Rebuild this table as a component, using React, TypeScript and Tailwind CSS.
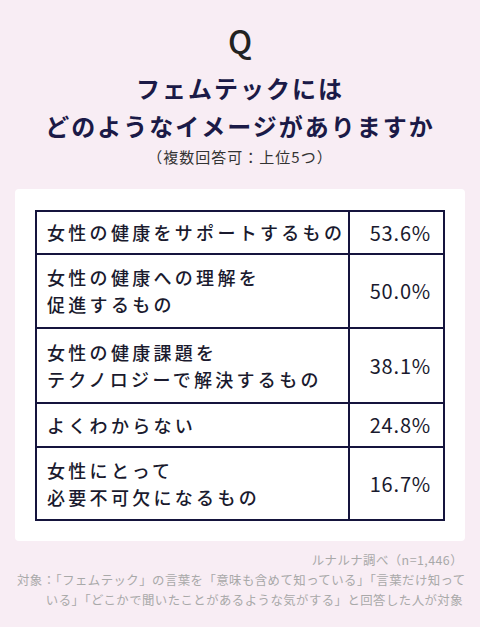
const rows = [
  { lines: ["女性の健康をサポートするもの"], value: "53.6%", h: "h-[41px]" },
  { lines: ["女性の健康への理解を", "促進するもの"], value: "50.0%", h: "h-[74px]" },
  { lines: ["女性の健康課題を", "テクノロジーで解決するもの"], value: "38.1%", h: "h-[75px]" },
  { lines: ["よくわからない"], value: "24.8%", h: "h-[44px]" },
  { lines: ["女性にとって", "必要不可欠になるもの"], value: "16.7%", h: "h-[73px]" },
];

export default function App() {
  return (
    <div
      className="w-[480px] h-[627px] bg-[#f8edf4] flex flex-col items-center pt-[20px]"
      style={{ fontFamily: '"Noto Sans CJK JP", "Noto Sans", sans-serif' }}
    >
      {/* Q mark */}
      <div className="text-[32px] leading-[40px] font-medium text-[#222222]">Q</div>

      {/* Title */}
      <h1 className="mt-[9px] text-center text-[24px] leading-[38px] font-bold tracking-[2px] text-[#1b1a47]">
        フェムテックには
        <br />
        どのようなイメージがありますか
      </h1>
      <p className="mt-[1px] text-[15px] leading-[22px] tracking-[1px] text-[#333333]">
        （複数回答可：上位5つ）
      </p>

      {/* Card */}
      <div className="mt-[21px] w-[450px] bg-white rounded-[4px] px-[20px] pt-[21px] pb-[20px]">
        <div className="border-2 border-[#15143d]">
          {rows.map((r, i) => (
            <div
              key={i}
              className={`flex ${r.h} ${i > 0 ? "border-t-2 border-[#15143d]" : ""}`}
            >
              <div className="w-[313px] border-r-2 border-[#15143d] flex flex-col justify-center pl-[10px] text-[18px] leading-[27px] font-medium tracking-[3.3px] text-[#1a1a2e]">
                {r.lines.map((l) => (
                  <span key={l} className="whitespace-nowrap">
                    {l}
                  </span>
                ))}
              </div>
              <div className="flex-1 flex items-center justify-end pr-[12px] text-[20px] tracking-[0.8px] text-[#1a1a2e]">
                {r.value}
              </div>
            </div>
          ))}
        </div>
      </div>

      {/* Footer */}
      <div className="w-full px-[17px] mt-[9px] text-right text-[12.4px] leading-[20px] tracking-[0.45px] text-[#a9a9a9]">
        <div>ルナルナ調べ（n=1,446）</div>
        <div className="whitespace-nowrap">
          対象：「フェムテック」の言葉を「意味も含めて知っている」「言葉だけ知って
        </div>
        <div className="whitespace-nowrap">
          いる」「どこかで聞いたことがあるような気がする」と回答した人が対象
        </div>
      </div>
    </div>
  );
}
